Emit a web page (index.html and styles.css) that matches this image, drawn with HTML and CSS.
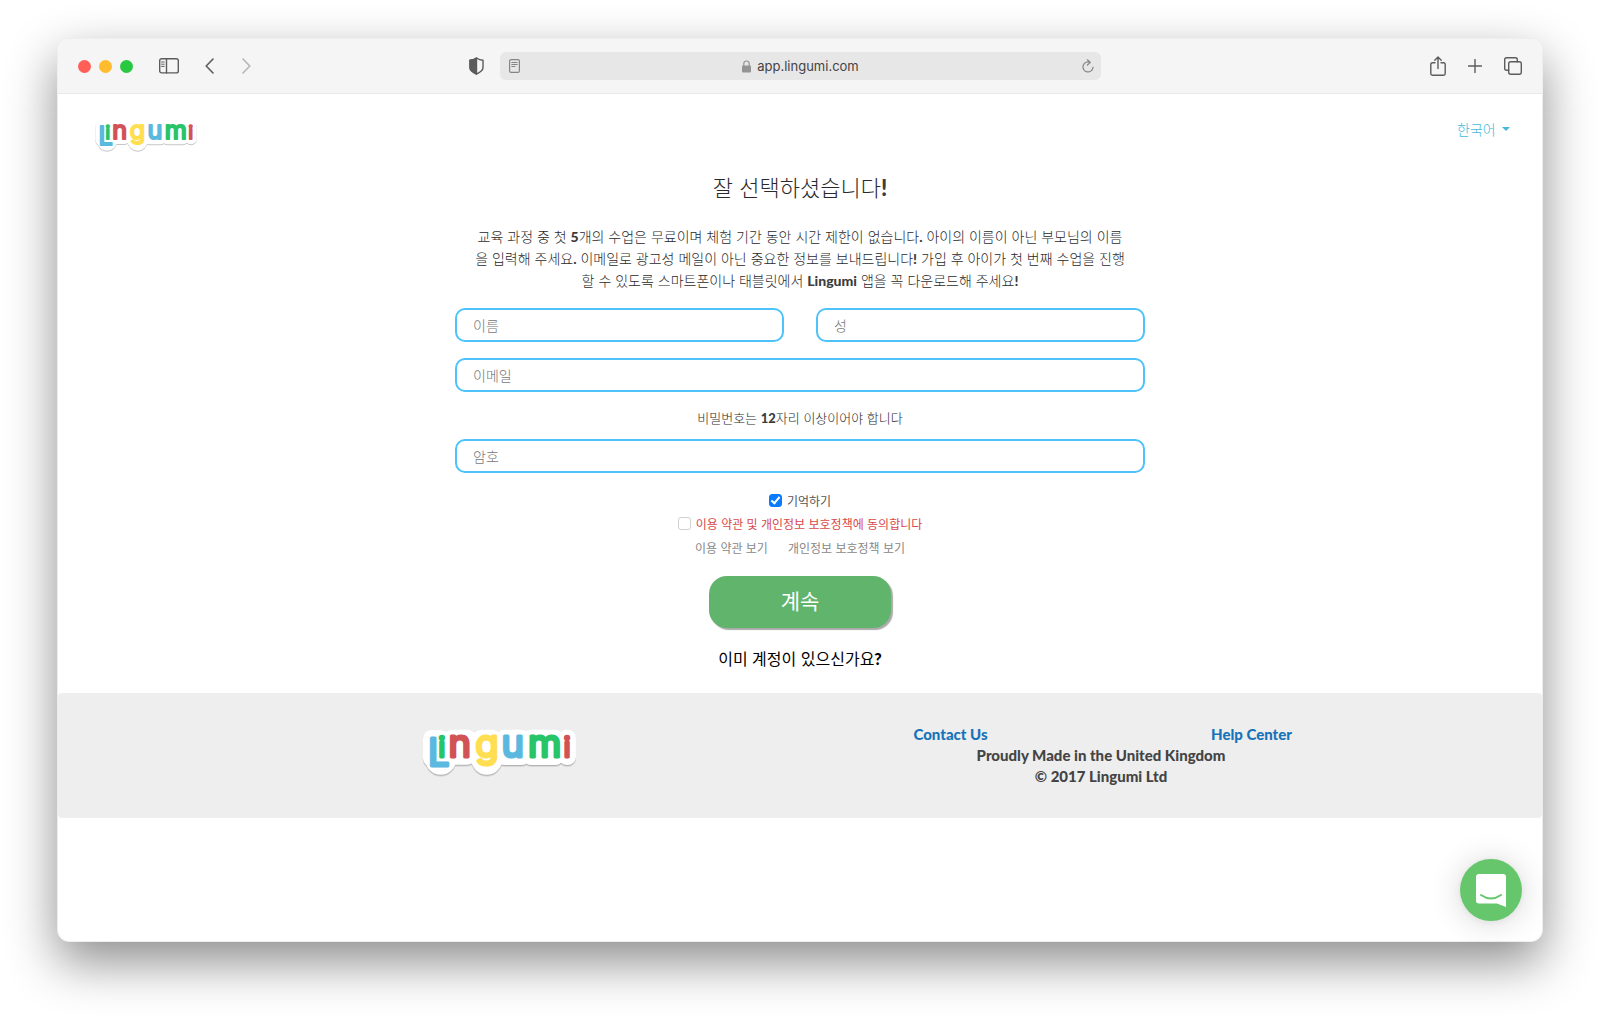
FILE: index.html
```
<!DOCTYPE html>
<html lang="ko">

<head>
    <meta charset="UTF-8">
    <meta name="viewport" content="width=device-width, initial-scale=1.0">
    <title>Lingumi</title>
    <link rel="stylesheet" href="styles.css">
</head>

<body>
    <div class="window">
        <div class="toolbar">
            <div class="toolbar-left">
                <div class="lights">
                    <span class="light red"></span>
                    <span class="light yellow"></span>
                    <span class="light green"></span>
                </div>
                <button class="tool-btn sidebar-btn" aria-label="Sidebar">
                    <svg width="20" height="16" viewBox="0 0 20 16">
                        <rect x="0.7" y="0.7" width="18.6" height="14.2" rx="2" />
                        <path d="M7.5 1V15" />
                        <path class="thin" d="M2.6 4H5.2M2.6 6.2H5.2M2.6 8.4H5.2" />
                    </svg>
                </button>
                <button class="tool-btn back-btn" aria-label="Back">
                    <svg width="9" height="16" viewBox="0 0 9 16"><path class="bold" d="M8 1L1.2 8L8 15" /></svg>
                </button>
                <button class="tool-btn forward-btn" aria-label="Forward">
                    <svg width="9" height="16" viewBox="0 0 9 16"><path class="bold" d="M1 1L7.8 8L1 15" /></svg>
                </button>
                <button class="tool-btn shield-btn" aria-label="Privacy report">
                    <svg width="15" height="18" viewBox="0 0 15 18">
                        <path d="M7.5 1Q10.5 3 14 3.3V10.5Q14 14.2 7.5 17Q1 14.2 1 10.5V3.3Q4.5 3 7.5 1Z" />
                        <path class="fill" d="M7.5 1V17Q1 14.2 1 10.5V3.3Q4.5 3 7.5 1Z" />
                    </svg>
                </button>
            </div>
            <div class="address">
                <button class="tool-btn" aria-label="Reader">
                    <svg class="soft" width="11" height="14" viewBox="0 0 11 14">
                        <rect x="0.6" y="0.6" width="9.8" height="12.8" rx="1.5" />
                        <path class="thin" d="M2.8 3.5H8.2M2.8 5.5H8.2M2.8 7.5H6" />
                    </svg>
                </button>
                <div class="address-url">
                    <svg width="9" height="13" viewBox="0 0 9 13">
                        <rect class="lock-body" x="0" y="5.5" width="9" height="7" rx="1" />
                        <path class="lock-arc" d="M1.8 6V3.7Q1.8 1 4.5 1Q7.2 1 7.2 3.7V6" />
                    </svg>
                    <input type="text" id="url" value="app.lingumi.com" aria-label="Address">
                </div>
                <button class="tool-btn" aria-label="Reload">
                    <svg class="soft" width="12" height="14" viewBox="0 0 12 14">
                        <path d="M8.3 3.5A5 5 0 1 0 11 8.2M5.4 0.8L8.3 3.4L5.4 6" />
                    </svg>
                </button>
            </div>
            <div class="toolbar-right">
                <button class="tool-btn" aria-label="Share">
                    <svg width="16" height="20" viewBox="0 0 16 20">
                        <path d="M5 6.8H2.5Q0.8 6.8 0.8 8.5V17.5Q0.8 19.2 2.5 19.2H13.5Q15.2 19.2 15.2 17.5V8.5Q15.2 6.8 13.5 6.8H11M8 12.5V1.2M4.8 4.2L8 1L11.2 4.2" />
                    </svg>
                </button>
                <button class="tool-btn" aria-label="New tab">
                    <svg width="14" height="14" viewBox="0 0 14 14"><path d="M7 0.5V13.5M0.5 7H13.5" /></svg>
                </button>
                <button class="tool-btn" aria-label="Show tabs">
                    <svg width="18" height="18" viewBox="0 0 18 18">
                        <rect x="4.7" y="4.7" width="12.6" height="12.6" rx="2" />
                        <path d="M4.7 13.3H2.5Q0.7 13.3 0.7 11.5V2.5Q0.7 0.7 2.5 0.7H11.5Q13.3 0.7 13.3 2.5V4.7" />
                    </svg>
                </button>
            </div>
        </div>

        <header class="header">
            <a href="#" class="logo logo-small">
                <svg viewBox="60 145 470 152">
                    <g id="wordmark">
                        <g class="logo-back">
                            <rect x="66" y="154" width="72" height="110" rx="25" />
                            <rect x="94" y="156" width="54" height="80" rx="26" />
                            <circle cx="119" cy="242" r="46" />
                            <rect x="126" y="153" width="100" height="105" rx="28" />
                            <rect x="205" y="153" width="104" height="90" rx="40" />
                            <circle cx="257" cy="242" r="46" />
                            <rect x="283" y="153" width="104" height="106" rx="26" />
                            <rect x="364" y="153" width="124" height="106" rx="26" />
                            <rect x="472" y="153" width="52" height="106" rx="25" />
                        </g>
                        <text class="logo-text"><tspan class="letter blue" x="113" y="263">L</tspan><tspan class="letter-i green" x="122" y="235">i</tspan><tspan class="letter red" x="176" y="236">n</tspan><tspan class="letter yellow" x="257" y="236">g</tspan><tspan class="letter blue" x="335" y="236">u</tspan><tspan class="letter green" x="430" y="236">m</tspan><tspan class="letter-i red" x="497" y="235">i</tspan></text>
                    </g>
                </svg>
            </a>
            <div class="language">
                <select id="language" aria-label="언어">
                    <option>한국어</option>
                </select>
            </div>
        </header>

        <main class="signup">
            <h1>잘 선택하셨습니다<b>!</b></h1>
            <p class="intro">교육 과정 중 첫 <b>5</b>개의 수업은 무료이며 체험 기간 동안 시간 제한이 없습니다<b>.</b> 아이의 이름이 아닌 부모님의 이름<br>을 입력해 주세요<b>.</b> 이메일로 광고성 메일이 아닌 중요한 정보를 보내드립니다<b>!</b> 가입 후 아이가 첫 번째 수업을 진행<br>할 수 있도록 스마트폰이나 태블릿에서 <b>Lingumi</b> 앱을 꼭 다운로드해 주세요<b>!</b></p>
            <form>
                <div class="row">
                    <input type="text" class="field" placeholder="이름" aria-label="이름">
                    <input type="text" class="field" placeholder="성" aria-label="성">
                </div>
                <div class="row">
                    <input type="email" class="field" placeholder="이메일" aria-label="이메일">
                </div>
                <p class="hint">비밀번호는 <b>12</b>자리 이상이어야 합니다</p>
                <div class="row">
                    <input type="password" class="field" placeholder="암호" aria-label="암호">
                </div>
                <div class="check">
                    <input type="checkbox" id="remember" checked>
                    <label for="remember">기억하기</label>
                </div>
                <div class="check check-error">
                    <input type="checkbox" id="terms">
                    <label for="terms">이용 약관 및 개인정보 보호정책에 동의합니다</label>
                </div>
                <div class="policies">
                    <a href="#">이용 약관 보기</a>
                    <a href="#">개인정보 보호정책 보기</a>
                </div>
                <button type="submit" class="continue-btn">계속</button>
            </form>
            <a href="#" class="login-link">이미 계정이 있으신가요<b>?</b></a>
        </main>

        <footer class="footer">
            <div class="footer-inner">
                <a href="#" class="logo logo-large">
                    <svg viewBox="60 145 470 152">
                        <use href="#wordmark" />
                    </svg>
                </a>
                <div class="footer-info">
                    <div class="footer-links">
                        <a href="#">Contact Us</a>
                        <a href="#">Help Center</a>
                    </div>
                    <p>Proudly Made in the United Kingdom</p>
                    <p>© 2017 Lingumi Ltd</p>
                </div>
            </div>
        </footer>

        <button class="chat-btn" aria-label="Chat">
            <svg width="30" height="34" viewBox="0 0 30 34">
                <path class="chat-box" d="M3 0H27Q30 0 30 3V33L21 29.5H3Q0 29.5 0 26.5V3Q0 0 3 0Z" />
                <path class="chat-smile" d="M5 21Q15 28 25 21" />
            </svg>
        </button>
    </div>
</body>

</html>
```
FILE: styles.css
```
* {
    box-sizing: border-box;
}

body {
    margin: 0;
    padding: 38px 57px 75px;
    min-height: 100vh;
    display: flex;
    background-color: #fff;
    color: #2a2a2a;
    font-family: "Noto Sans CJK KR", sans-serif;
    font-size: 14px;
    font-weight: 300;
}

a {
    text-decoration: none;
}

b {
    color: #3c3c3c;
    font-family: Lato, sans-serif;
    font-weight: 900;
    line-height: 1;
}

p {
    margin: 0;
}

button,
input,
select {
    font-family: inherit;
    font-weight: inherit;
}

.window {
    position: relative;
    flex: 1;
    min-width: 0;
    display: flex;
    flex-direction: column;
    background-color: #fff;
    border: 1px solid #eee;
    border-radius: 12px;
    box-shadow: 0 20px 50px rgba(0, 0, 0, 0.45);
}

/* browser toolbar */
.toolbar {
    display: grid;
    grid-template-columns: 1fr minmax(200px, 601px) 1fr;
    align-items: center;
    height: 55px;
    padding: 0 20px;
    background-color: #f5f5f5;
    border-bottom: 1px solid #e8e8e8;
    border-radius: 12px 12px 0 0;
}

.toolbar-left,
.toolbar-right,
.lights {
    display: flex;
    align-items: center;
}

.lights {
    gap: 8px;
}

.light {
    width: 13px;
    height: 13px;
    border-radius: 50%;
}

.light.red {
    background-color: #ff5f57;
}

.light.yellow {
    background-color: #febc2e;
}

.light.green {
    background-color: #28c840;
}

.tool-btn {
    display: flex;
    padding: 0;
    border: none;
    background: none;
    cursor: pointer;
}

.tool-btn svg {
    fill: none;
    stroke: #5c5c5c;
    stroke-width: 1.4;
    stroke-linecap: round;
    stroke-linejoin: round;
}

.tool-btn svg.soft {
    stroke: #858585;
    stroke-width: 1.2;
}

.tool-btn .thin {
    stroke-width: 1;
}

.tool-btn .bold {
    stroke-width: 1.6;
}

.tool-btn .fill {
    fill: #5c5c5c;
}

.sidebar-btn {
    margin-left: 26px;
}

.back-btn {
    margin-left: 26px;
}

.forward-btn {
    margin-left: 28px;
}

.forward-btn svg {
    stroke: #b5b5b5;
}

.shield-btn {
    margin-left: auto;
    margin-right: 16px;
}

.address {
    display: flex;
    align-items: center;
    justify-content: space-between;
    height: 28px;
    padding: 0 7px 0 9px;
    background-color: #e7e7e7;
    border-radius: 6px;
}

.address-url {
    display: flex;
    align-items: center;
    gap: 6px;
}

.address-url input {
    field-sizing: content;
    padding: 0;
    border: none;
    background: none;
    color: #444;
    font-family: Inter, sans-serif;
    font-size: 13px;
    font-weight: 400;
}

.lock-body {
    fill: #949494;
}

.lock-arc {
    fill: none;
    stroke: #949494;
    stroke-width: 1.2;
}

.toolbar-right {
    justify-content: flex-end;
    gap: 22px;
}

/* page header */
.header {
    display: flex;
    justify-content: space-between;
    align-items: flex-start;
    padding: 25px 32px 0 36px;
}

.logo {
    display: block;
}

.logo svg {
    display: block;
    width: 100%;
    overflow: visible;
}

.logo-small {
    width: 104px;
}

.logo-large {
    width: 157px;
    margin-top: 3px;
}

.logo-back {
    fill: #fff;
    filter: drop-shadow(0 4px 1px rgba(0, 0, 0, 0.25));
}

.logo-text {
    font-family: Inter, sans-serif;
    font-weight: 400;
    text-anchor: middle;
    stroke-width: 9px;
    stroke-linejoin: round;
}

.letter {
    font-size: 114px;
}

.letter-i {
    font-size: 82px;
}

.logo-text .blue {
    fill: #5bb9df;
    stroke: #5bb9df;
}

.logo-text .green {
    fill: #27c468;
    stroke: #27c468;
}

.logo-text .red {
    fill: #d25356;
    stroke: #d25356;
}

.logo-text .yellow {
    fill: #ffde52;
    stroke: #ffde52;
}

.language {
    display: flex;
    align-items: center;
    gap: 6px;
    color: #46b8da;
}

.language select {
    appearance: none;
    height: 20px;
    padding: 0;
    border: none;
    background: none;
    color: inherit;
    font-size: 14px;
    cursor: pointer;
}

.language::after {
    content: "";
    border: 4px solid transparent;
    border-top-color: #46b8da;
    border-bottom: none;
}

/* sign up form */
.signup {
    width: 100%;
    max-width: 690px;
    margin: 18px auto 23px;
    text-align: center;
}

.signup h1 {
    margin: 0 0 24px;
    font-size: 22px;
    font-weight: 300;
    line-height: 30px;
}

.intro {
    margin-bottom: 17px;
    line-height: 22px;
}

.row {
    display: flex;
    gap: 32px;
    margin-bottom: 16px;
}

.field {
    flex: 1;
    min-width: 0;
    height: 34px;
    padding: 0 16px;
    border: 2px solid #4dc3fa;
    border-radius: 10px;
    background-color: #fff;
    font-size: 14px;
}

.field::placeholder {
    color: #777;
}

.hint {
    margin-bottom: 11px;
    font-size: 13px;
    line-height: 20px;
}

.check {
    display: flex;
    justify-content: center;
    align-items: center;
    gap: 5px;
    height: 23px;
    color: #555;
    font-size: 12px;
    font-weight: 400;
}

.check input {
    appearance: none;
    display: flex;
    justify-content: center;
    width: 13px;
    height: 13px;
    margin: 0;
    border: 1px solid #d0d0d0;
    border-radius: 3px;
    background-color: #fff;
}

.check input:checked {
    border-color: #0a7aff;
    background-color: #0a7aff;
}

.check input:checked::after {
    content: "";
    width: 3px;
    height: 7px;
    border: solid #fff;
    border-width: 0 2px 2px 0;
    transform: rotate(40deg);
}

.check-error {
    color: #d9484a;
}

.policies {
    display: flex;
    justify-content: center;
    gap: 20px;
    margin-bottom: 16px;
    font-size: 12px;
    font-weight: 400;
    line-height: 25px;
}

.policies a {
    color: #888;
}

.continue-btn {
    width: 182px;
    height: 52px;
    padding: 0 0 3px;
    border: none;
    border-radius: 18px;
    background-color: #61b46b;
    box-shadow: 2px 2px 1px #aaa;
    color: #fff;
    font-size: 21px;
    font-weight: 400;
    cursor: pointer;
}

.continue-btn:hover {
    background-color: #52a55c;
}

.login-link {
    display: block;
    margin-top: 18px;
    color: #000;
    font-size: 16px;
    font-weight: 400;
    line-height: 24px;
}

.login-link b {
    color: #000;
}

/* footer */
.footer {
    padding: 31px 0;
    background-color: #eee;
    border-radius: 4px;
}

.footer-inner {
    display: grid;
    grid-template-columns: 1fr 1fr;
    align-items: start;
    justify-items: center;
    max-width: 1204px;
    margin: 0 auto;
}

.footer-info {
    width: 100%;
    color: #444;
    font-family: Lato, sans-serif;
    font-size: 15px;
    font-weight: 900;
    line-height: 21px;
    text-align: center;
}

.footer-links {
    display: grid;
    grid-template-columns: 1fr 1fr;
}

.footer-links a {
    color: #1673b9;
}

.chat-btn {
    position: absolute;
    right: 20px;
    bottom: 20px;
    display: flex;
    justify-content: center;
    align-items: center;
    width: 62px;
    height: 62px;
    padding: 2px 0 0;
    border: none;
    border-radius: 50%;
    background-color: #65c66c;
    box-shadow: 0 1px 6px rgba(0, 0, 0, 0.06), 0 2px 32px rgba(0, 0, 0, 0.16);
    cursor: pointer;
}

.chat-box {
    fill: #fff;
}

.chat-smile {
    fill: none;
    stroke: #65c66c;
    stroke-width: 2;
    stroke-linecap: round;
}
```
